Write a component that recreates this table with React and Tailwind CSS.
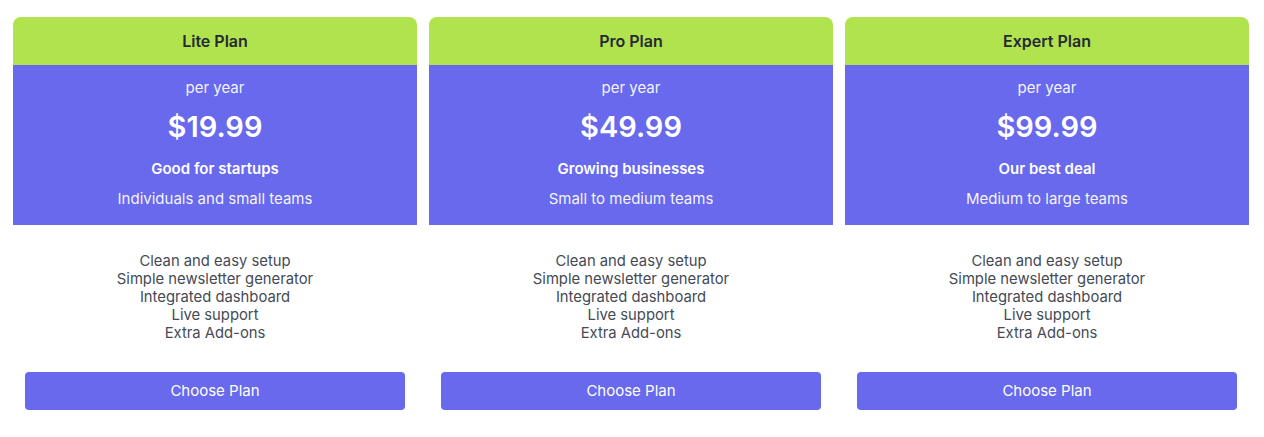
import React from 'react';

const plans = [
    { name: 'Lite Plan', price: '$19.99', tag: 'Good for startups', audience: 'Individuals and small teams' },
    { name: 'Pro Plan', price: '$49.99', tag: 'Growing businesses', audience: 'Small to medium teams' },
    { name: 'Expert Plan', price: '$99.99', tag: 'Our best deal', audience: 'Medium to large teams' },
];

const features = [
    'Clean and easy setup',
    'Simple newsletter generator',
    'Integrated dashboard',
    'Live support',
    'Extra Add-ons',
];

const PlanCard = ({ plan }) => (
    <div className="w-[404px] bg-white rounded-t-lg overflow-hidden">
        <div className="h-12 bg-[#b1e34f] flex items-center justify-center text-[16px] font-semibold text-[#252a33]">
            {plan.name}
        </div>
        <div className="h-[160px] bg-[#6869ec] text-white flex flex-col items-center pt-3">
            <p className="text-[15px] leading-[22px] text-white/95">per year</p>
            <p className="mt-[10px] text-[29px] leading-9 font-semibold">{plan.price}</p>
            <p className="mt-[13px] text-[15px] leading-[22px] font-semibold">{plan.tag}</p>
            <p className="mt-2 text-[15px] leading-[22px] text-white/95">{plan.audience}</p>
        </div>
        <ul className="pt-[27px] flex flex-col items-center text-[14.8px] leading-[18px] text-[#454a55]">
            {features.map((f) => (
                <li key={f}>{f}</li>
            ))}
        </ul>
        <div className="px-3 mt-[30px]">
            <button className="w-full h-[38px] rounded bg-[#6869ec] text-white text-[15px]">
                Choose Plan
            </button>
        </div>
    </div>
);

export default function App() {
    return (
        <div className="min-h-[437px] bg-white pt-[17px] pl-[13px] flex gap-3" style={{ fontFamily: 'Inter, "Noto Sans", sans-serif' }}>
            {plans.map((p) => (
                <PlanCard key={p.name} plan={p} />
            ))}
        </div>
    );
}
